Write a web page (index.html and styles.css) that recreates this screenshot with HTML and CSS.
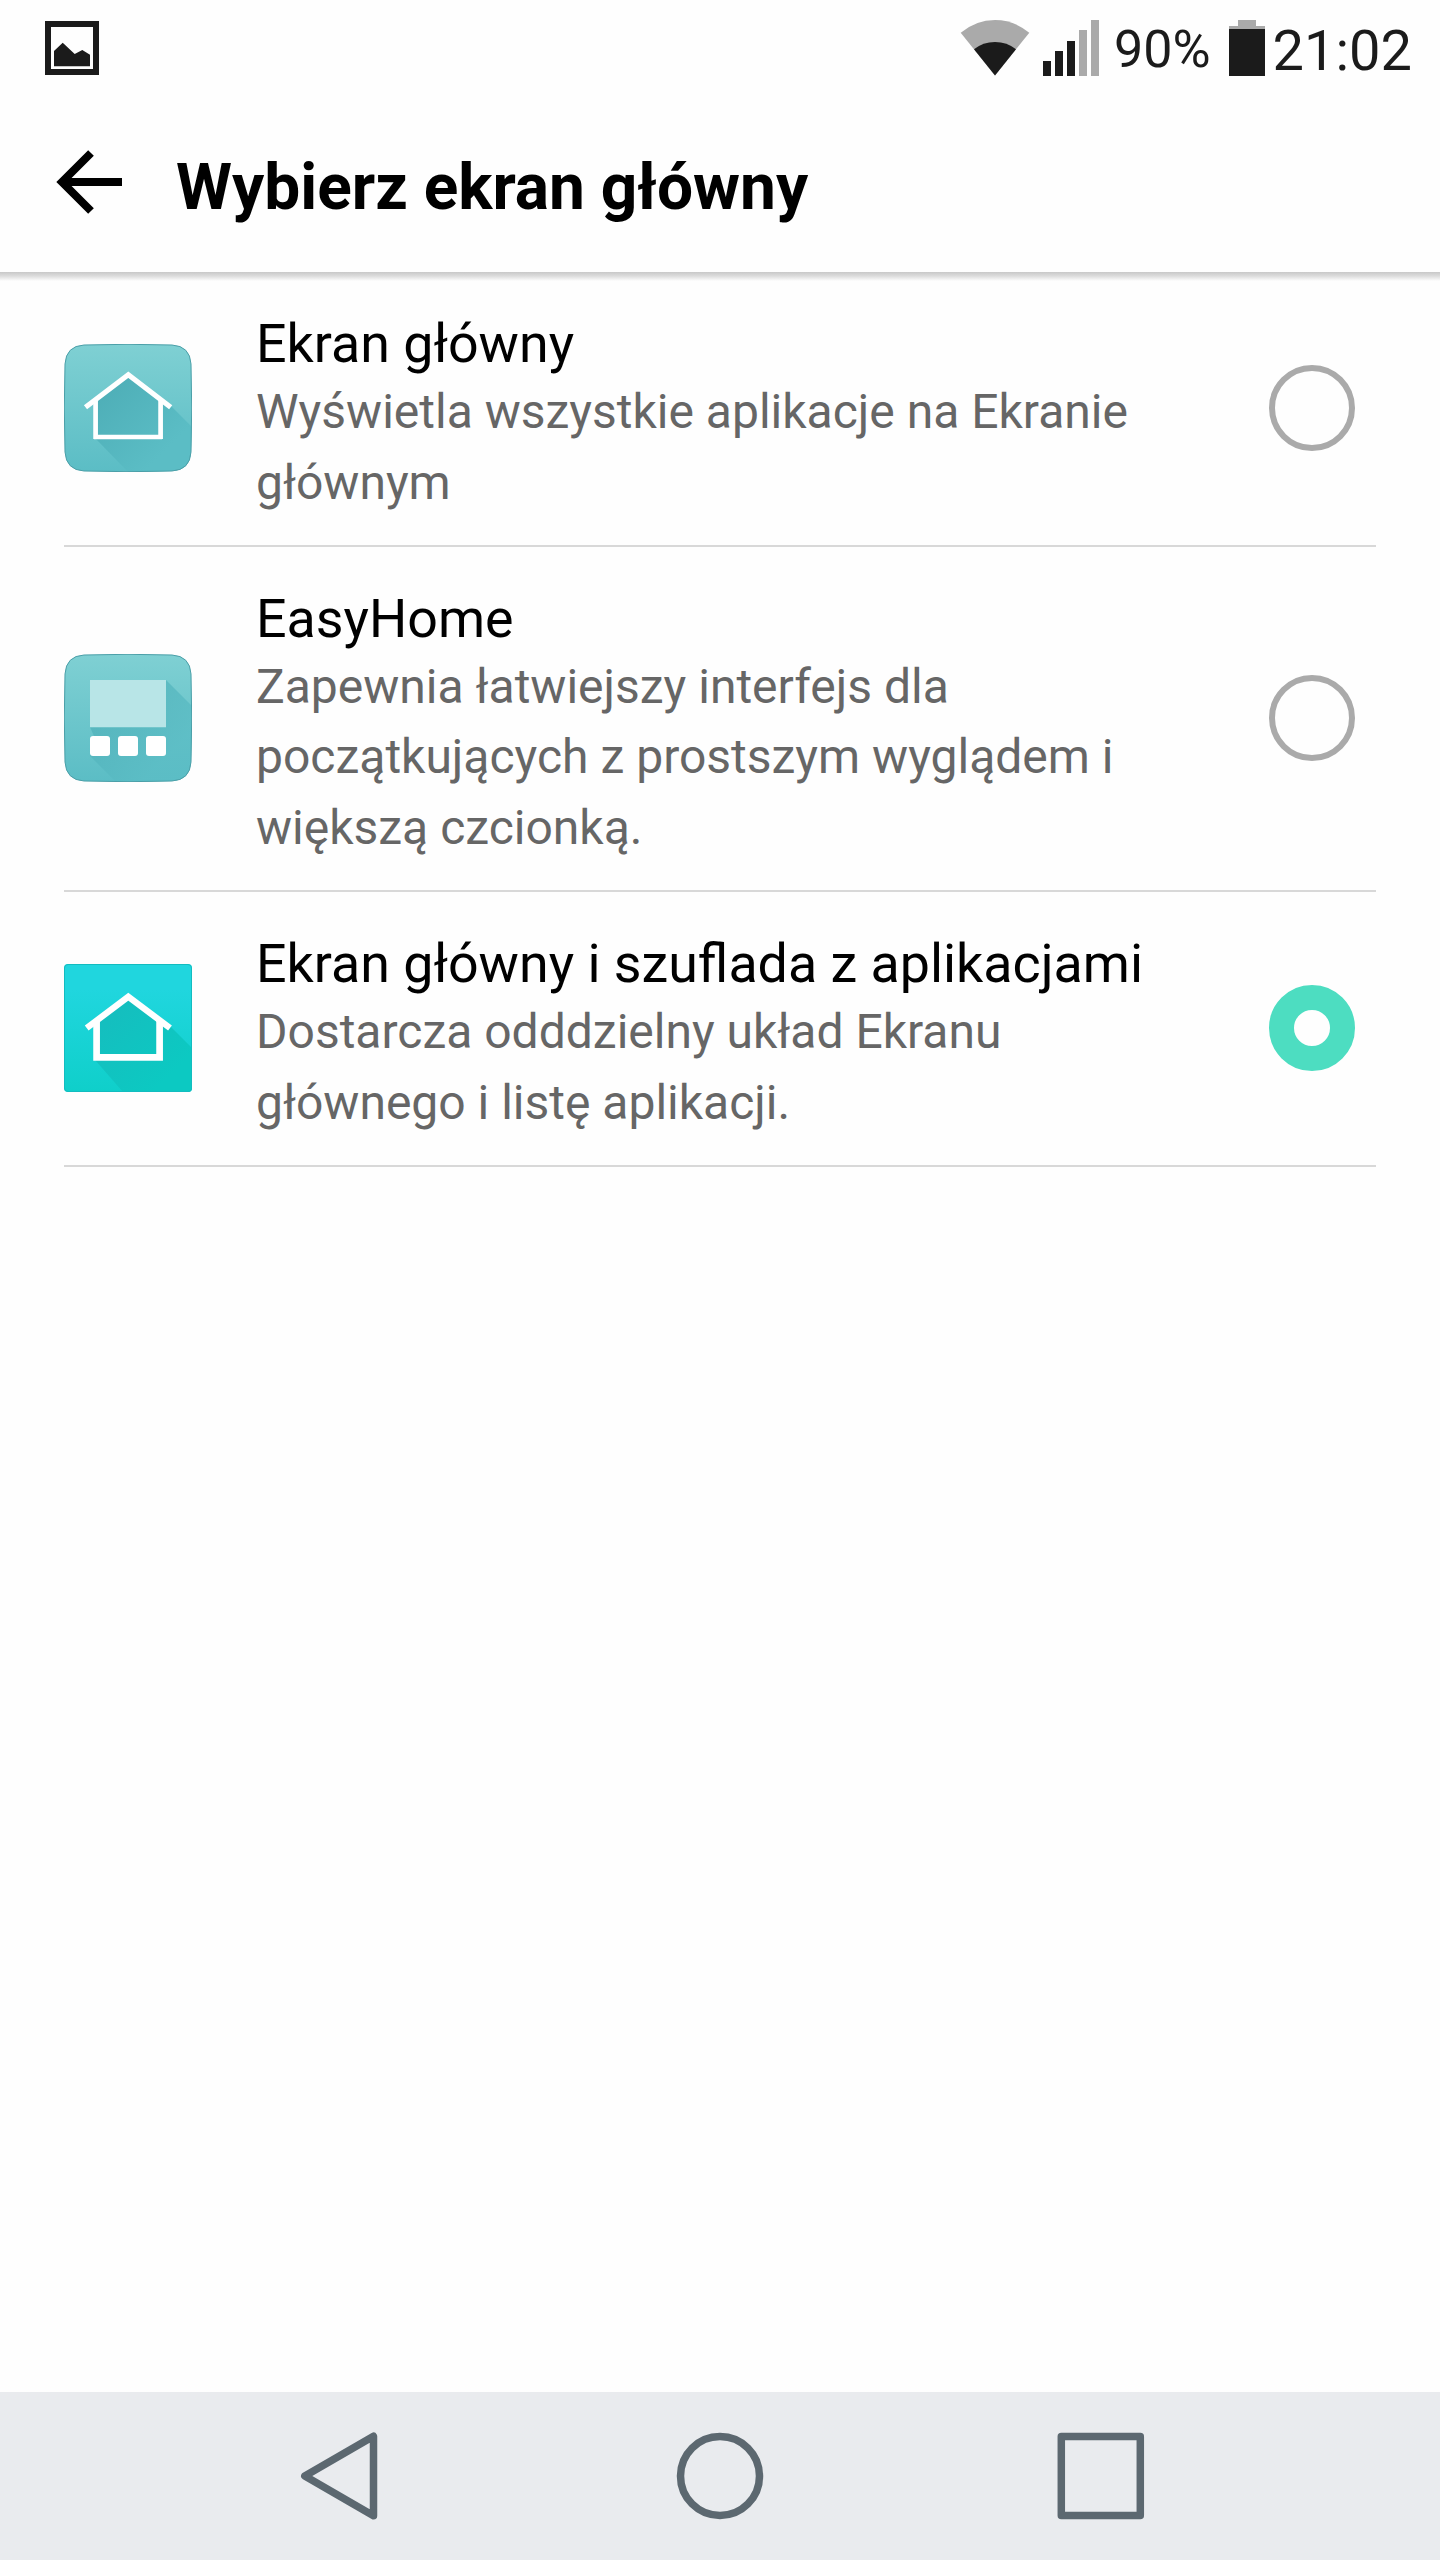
FILE: index.html
```html
<!DOCTYPE html>
<html lang="pl">
<head>
    <meta charset="UTF-8">
    <meta name="viewport" content="width=device-width, initial-scale=1.0">
    <title>Wybierz ekran główny</title>
    <link rel="stylesheet" href="styles.css">
</head>
<body>
    <!-- Status bar -->
    <div class="status-bar">
        <svg class="picture-icon" width="54" height="54" viewBox="0 0 54 54">
            <rect x="3" y="3" width="48" height="48" fill="none" stroke="#1b1b1b" stroke-width="6"/>
            <path d="M9 30l8.7-8.3 12 11.2 7.6-3.8 7.7 4.6v11.6H9z" fill="#1b1b1b"/>
        </svg>
        <div class="status-right">
            <svg class="wifi" width="70" height="56" viewBox="0 0 70 56">
                <path d="M35 55.5L.7 12.8Q16 0 35 0t34.3 12.8z" fill="#aaa"/>
                <path d="M35 55.5L14 29.3Q23 22 35 22t21 7.3z" fill="#1b1b1b"/>
            </svg>
            <svg class="signal" width="56" height="56" viewBox="0 0 56 56">
                <path d="M0 41h8v15H0zM12 31h8v25h-8zM24 21h8v35h-8z" fill="#1b1b1b"/>
                <path d="M36 10h8v46h-8zM48 0h8v56h-8z" fill="#aaa"/>
            </svg>
            <span class="percent">90%</span>
            <svg class="battery" width="36" height="56" viewBox="0 0 36 56">
                <path d="M9 0h18v6h9v3H0V6h9z" fill="#aaa"/>
                <path d="M0 9h36v47H0z" fill="#1b1b1b"/>
            </svg>
            <span class="clock">21:02</span>
        </div>
    </div>

    <!-- Header -->
    <header class="header">
        <svg class="back" width="66" height="66" viewBox="0 0 66 66">
            <path d="M35 4L6 33l29 29M8 33h58" fill="none" stroke="#000" stroke-width="8"/>
        </svg>
        <h1>Wybierz ekran główny</h1>
    </header>

    <!-- List of home screens -->
    <ul class="list">
        <li class="item">
            <svg class="app-icon" width="128" height="128" viewBox="0 0 128 128">
                <defs>
                    <linearGradient id="teal" x1="0" y1="0" x2="0" y2="1">
                        <stop offset="0" stop-color="#7fd0d3"/>
                        <stop offset="1" stop-color="#5bbdc5"/>
                    </linearGradient>
                    <linearGradient id="tealShadow" x1="0" y1="0" x2="1" y2="1">
                        <stop offset="0" stop-color="#4cacb5"/>
                        <stop offset=".75" stop-color="#5bbdc5"/>
                    </linearGradient>
                    <clipPath id="squircle">
                        <path d="M20 1Q64-.4 108 1Q126 2 127 20Q128.4 64 127 108Q126 126 108 127Q64 128.4 20 127Q2 126 1 108Q-.4 64 1 20Q2 2 20 1z"/>
                    </clipPath>
                </defs>
                <g clip-path="url(#squircle)">
                    <path d="M0 0h128v128H0z" fill="url(#teal)"/>
                    <path d="M64 31L31 56v38l33 34h64V83l-20-20z" fill="url(#tealShadow)"/>
                </g>
                <path d="M20 1Q64-.4 108 1Q126 2 127 20Q128.4 64 127 108Q126 126 108 127Q64 128.4 20 127Q2 126 1 108Q-.4 64 1 20Q2 2 20 1z" fill="none" stroke="#4b9fa8"/>
                <path d="M21.5 63.3l42.8-32.6 42.4 32.6" fill="none" stroke="#fff" stroke-width="5.2"/>
                <path d="M31.6 55v40M96.6 55v40M30 93h68" fill="none" stroke="#fff" stroke-width="4.7"/>
            </svg>
            <div class="text">
                <h2>Ekran główny</h2>
                <p>Wyświetla wszystkie aplikacje na Ekranie głównym</p>
            </div>
            <span class="radio"></span>
        </li>
        <li class="item">
            <svg class="app-icon" width="128" height="128" viewBox="0 0 128 128">
                <g clip-path="url(#squircle)">
                    <path d="M0 0h128v128H0z" fill="url(#teal)"/>
                    <path d="M102 26l26 26v76H52L26 102v-6h10L26 73z" fill="url(#tealShadow)" opacity=".75"/>
                </g>
                <path d="M20 1Q64-.4 108 1Q126 2 127 20Q128.4 64 127 108Q126 126 108 127Q64 128.4 20 127Q2 126 1 108Q-.4 64 1 20Q2 2 20 1z" fill="none" stroke="#4b9fa8"/>
                <path d="M26 26h76v47.3H26z" fill="#b8e5e7"/>
                <g fill="#fff">
                    <rect x="26" y="82" width="20" height="20" rx="3"/>
                    <rect x="54" y="82" width="20" height="20" rx="3"/>
                    <rect x="82" y="82" width="20" height="20" rx="3"/>
                </g>
            </svg>
            <div class="text">
                <h2>EasyHome</h2>
                <p>Zapewnia łatwiejszy interfejs dla początkujących z prostszym wyglądem i większą czcionką.</p>
            </div>
            <span class="radio"></span>
        </li>
        <li class="item">
            <svg class="app-icon" width="128" height="128" viewBox="0 0 128 128">
                <defs>
                    <linearGradient id="cyan" x1="0" y1="0" x2="0" y2="1">
                        <stop offset=".2" stop-color="#20d6de"/>
                        <stop offset="1" stop-color="#0fcfca"/>
                    </linearGradient>
                    <linearGradient id="cyanShadow" x1="0" y1="0" x2="1" y2="1">
                        <stop offset=".2" stop-color="#14bfbf"/>
                        <stop offset=".8" stop-color="#0cc9c2"/>
                    </linearGradient>
                </defs>
                <rect width="128" height="128" rx="4" fill="url(#cyan)"/>
                <path d="M64 33L31 58v38l28 32h65q4 0 4-4V84l-21-21z" fill="url(#cyanShadow)"/>
                <rect x=".5" y=".5" width="127" height="127" rx="3.5" fill="none" stroke="#13bcc0"/>
                <path d="M22.7 64l41.6-31.2L106 64" fill="none" stroke="#fff" stroke-width="6.3"/>
                <path d="M32.6 56v37.3h63V56" fill="none" stroke="#fff" stroke-width="6.7"/>
            </svg>
            <div class="text">
                <h2>Ekran główny i szuflada z aplikacjami</h2>
                <p>Dostarcza odddzielny układ Ekranu głównego i listę aplikacji.</p>
            </div>
            <span class="radio checked"></span>
        </li>
    </ul>

    <!-- Navigation bar -->
    <nav class="nav-bar">
        <svg width="88" height="88" viewBox="0 0 88 88">
            <path d="M9.8 44L78.5 4.3v79.4z"/>
        </svg>
        <svg width="88" height="88" viewBox="0 0 88 88">
            <circle cx="44" cy="44" r="39.5"/>
        </svg>
        <svg width="88" height="88" viewBox="0 0 88 88">
            <rect x="4.3" y="4.5" width="79" height="79"/>
        </svg>
    </nav>
</body>
</html>
```

FILE: styles.css
```css
* {
    box-sizing: border-box;
    margin: 0;
    padding: 0;
}

body {
    display: flex;
    flex-direction: column;
    height: 100vh;
    background-color: #fefefe;
    color: #000;
    font-family: Roboto, "Noto Sans", sans-serif;
}

svg {
    display: block;
    flex-shrink: 0;
}

/* Status bar */
.status-bar {
    display: flex;
    justify-content: space-between;
    align-items: center;
    height: 96px;
    padding: 0 28px 0 45px;
    color: #1b1b1b;
}

.status-right {
    display: flex;
    align-items: center;
}

.signal {
    margin-left: 13px;
}

.percent {
    margin-left: 15px;
    font-size: 52px;
    line-height: 60px;
    padding-top: 4px;
}

.battery {
    margin-left: 18px;
}

.clock {
    margin-left: 8px;
    font-size: 56px;
    line-height: 66px;
    padding-top: 5px;
}

/* Header */
.header {
    position: relative;
    display: flex;
    align-items: center;
    height: 176px;
    padding: 0 56px 4px;
}

.header::after {
    content: '';
    position: absolute;
    top: 100%;
    left: 0;
    right: 0;
    height: 9px;
    background: linear-gradient(#c8c8c8, #dcdcdc 45%, #fefefe);
}

.header h1 {
    margin-left: 54px;
    padding-top: 11px;
    font-size: 64px;
    font-weight: 700;
    line-height: 76px;
}

/* List */
.list {
    flex: 1;
    padding: 0 64px;
    list-style: none;
}

.item {
    display: flex;
    align-items: center;
    padding-right: 21px;
    border-bottom: 2px solid #d8d8d8;
}

.text {
    width: 940px;
    margin: 0 73px 0 64px;
    padding: 39px 0 26.75px;
}

.text h2 {
    font-size: 53.75px;
    font-weight: 400;
    line-height: 66px;
}

.text p {
    color: #666;
    font-size: 48px;
    line-height: 70.5px;
}

.radio {
    flex-shrink: 0;
    width: 86px;
    height: 86px;
    border: 6px solid #aaa;
    border-radius: 50%;
}

.radio.checked {
    border: 25px solid #4dddc1;
}

/* Navigation bar */
.nav-bar {
    display: flex;
    justify-content: center;
    align-items: center;
    gap: 293px;
    height: 168px;
    background-color: #e9ebee;
}

.nav-bar svg {
    fill: none;
    stroke: #5c6870;
    stroke-width: 7.5;
    stroke-linejoin: round;
}
```
